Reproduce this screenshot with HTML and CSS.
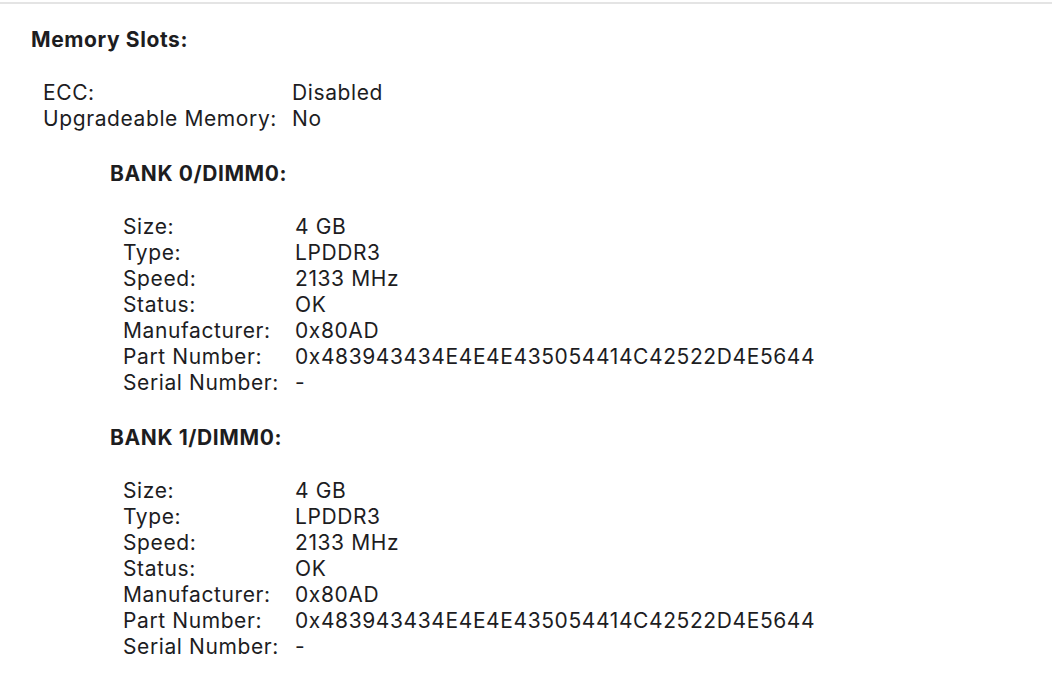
FILE: index.html
```html
<!DOCTYPE html>
<html lang="en">
<head>
  <meta charset="UTF-8">
  <title>Memory</title>
  <link rel="stylesheet" href="styles.css">
</head>
<body>

<div class="report">
  <h2 class="section-title">Memory Slots:</h2>

  <div class="props top-props">
    <span class="key">ECC:</span><span class="val">Disabled</span>
    <span class="key">Upgradeable Memory:</span><span class="val">No</span>
  </div>

  <!-- one block per memory bank -->
  <div class="bank">
    <h3 class="bank-title">BANK 0/DIMM0:</h3>
    <div class="props bank-props">
      <span class="key">Size:</span><span class="val">4 GB</span>
      <span class="key">Type:</span><span class="val">LPDDR3</span>
      <span class="key">Speed:</span><span class="val">2133 MHz</span>
      <span class="key">Status:</span><span class="val">OK</span>
      <span class="key">Manufacturer:</span><span class="val">0x80AD</span>
      <span class="key">Part Number:</span><span class="val">0x483943434E4E4E435054414C42522D4E5644</span>
      <span class="key">Serial Number:</span><span class="val">-</span>
    </div>
  </div>

  <div class="bank">
    <h3 class="bank-title">BANK 1/DIMM0:</h3>
    <div class="props bank-props">
      <span class="key">Size:</span><span class="val">4 GB</span>
      <span class="key">Type:</span><span class="val">LPDDR3</span>
      <span class="key">Speed:</span><span class="val">2133 MHz</span>
      <span class="key">Status:</span><span class="val">OK</span>
      <span class="key">Manufacturer:</span><span class="val">0x80AD</span>
      <span class="key">Part Number:</span><span class="val">0x483943434E4E4E435054414C42522D4E5644</span>
      <span class="key">Serial Number:</span><span class="val">-</span>
    </div>
  </div>
</div>

</body>
</html>
```

FILE: styles.css
```css
body {
  margin: 0;
  background: #fff;
  color: #1d1d1f;
  font-family: Inter, 'Noto Sans', sans-serif;
  font-size: 21px;
  line-height: 26px;
  letter-spacing: 0.6px;
  height: 100vh;
  overflow: hidden;
}

.report {
  margin-top: 2px;
  border-top: 2px solid #e4e4e4;
  padding: 23px 0 0 31px;
}

.section-title {
  margin: 0;
  font-size: 21px;
  font-weight: 700;
  line-height: 26px;
}

.props {
  display: grid;
  grid-auto-rows: 26px;
}

.top-props {
  grid-template-columns: 249px auto;
  margin: 27px 0 0 12px;
}

.bank {
  margin-left: 79px;
}

.bank-title {
  margin: 29px 0 0 0;
  font-size: 21px;
  font-weight: 700;
  line-height: 26px;
}

.bank-props {
  grid-template-columns: 172px auto;
  margin: 27px 0 0 13px;
}
```
